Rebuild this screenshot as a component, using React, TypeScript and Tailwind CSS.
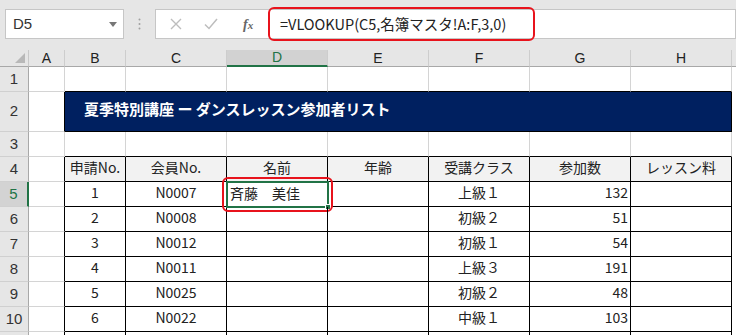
import React from 'react'

const cols = ['w-[36px]', 'w-[61px]', 'w-[101px]', 'w-[101px]', 'w-[101px]', 'w-[101px]', 'w-[101px]', 'w-[101px]']
const letters = ['A', 'B', 'C', 'D', 'E', 'F', 'G', 'H']

const rows = [
  { no: '1', member: 'N0007', name: '斉藤　美佳', cls: '上級１', count: '132' },
  { no: '2', member: 'N0008', name: '', cls: '初級２', count: '51' },
  { no: '3', member: 'N0012', name: '', cls: '初級１', count: '54' },
  { no: '4', member: 'N0011', name: '', cls: '上級３', count: '191' },
  { no: '5', member: 'N0025', name: '', cls: '初級２', count: '48' },
  { no: '6', member: 'N0022', name: '', cls: '中級１', count: '103' },
]

const jp = "font-['Noto_Sans_CJK_JP',sans-serif]"

function RowHead({ n, h = 'h-[25px]', active }: { n?: string; h?: string; active?: boolean }) {
  return (
    <div
      className={`${h} w-[29px] shrink-0 flex items-center justify-center border-b border-[#d0d0d0] font-['Liberation_Sans',sans-serif] text-[15px] ${
        active ? 'bg-[#d3d3d3] text-[#217346] border-r-2 border-r-[#217346]' : 'bg-[#e6e6e6] text-[#333] border-r border-r-[#a8a8a8]'
      }`}
    >
      {n}
    </div>
  )
}

// plain empty cell with the light grid line
function Blank({ i, h = 'h-[25px]' }: { i: number; h?: string }) {
  return <div className={`${cols[i]} ${h} shrink-0 border-r border-b border-[#d4d4d4] bg-white`} />
}

export default function App() {
  return (
    <div className={`w-[736px] h-[335px] overflow-hidden bg-white ${jp}`}>
      {/* Formula bar */}
      <div className="h-[50px] bg-[#e6e6e6] flex items-start pt-[9px] pl-[5px]">
        <div className="w-[119px] h-[30px] bg-white border border-[#c6c6c6] flex items-center justify-between pl-[7px] pr-[6px]">
          <span className="font-['Liberation_Sans',sans-serif] text-[15px] text-[#333]">D5</span>
          <svg width="8" height="5" viewBox="0 0 8 5">
            <path d="M0 0h8L4 5z" fill="#777" />
          </svg>
        </div>
        <div className="w-[31px] h-[30px] flex items-center justify-center">
          <svg width="3" height="12" viewBox="0 0 3 12">
            <circle cx="1.5" cy="1.5" r="1" fill="#a0a0a0" />
            <circle cx="1.5" cy="6" r="1" fill="#a0a0a0" />
            <circle cx="1.5" cy="10.5" r="1" fill="#a0a0a0" />
          </svg>
        </div>
        <div className="h-[30px] flex-1 bg-white border border-[#c6c6c6] flex items-center">
          <div className="w-[110px] flex items-center shrink-0">
            <svg className="ml-[14px]" width="12" height="12" viewBox="0 0 12 12">
              <path d="M1 1l10 10M11 1L1 11" stroke="#bdbdbd" strokeWidth="1.4" />
            </svg>
            <svg className="ml-[22px]" width="14" height="12" viewBox="0 0 14 12">
              <path d="M1 6.5l4 4L13 1" stroke="#bdbdbd" strokeWidth="1.5" fill="none" />
            </svg>
            <span className="ml-[25px] font-['Liberation_Serif',serif] italic font-bold text-[14px] text-[#666]">
              f<span className="text-[11px]">x</span>
            </span>
          </div>
          <div className="relative flex-1 h-full flex items-center pl-[14px]">
            <span className="text-[14.5px] text-[#222]">=VLOOKUP(C5,名簿マスタ!A:F,3,0)</span>
            <div className="absolute left-[2px] top-[-3px] w-[267px] h-[34px] border-2 border-[#e8131c] rounded-[6px]" />
          </div>
        </div>
      </div>

      {/* Column headers */}
      <div className="flex h-[17px]">
        <div className="w-[29px] shrink-0 bg-[#e6e6e6] border-r border-[#c8c8c8] border-b border-b-[#a8a8a8] relative">
          <svg className="absolute right-[3px] bottom-[3px]" width="10" height="10" viewBox="0 0 10 10">
            <path d="M10 0v10H0z" fill="#b8b8b8" />
          </svg>
        </div>
        {letters.map((l, i) => (
          <div
            key={l}
            className={`${cols[i]} shrink-0 flex items-center justify-center font-['Liberation_Sans',sans-serif] text-[14px] border-r border-[#cdcdcd] ${
              l === 'D'
                ? 'bg-[#d2d2d2] text-[#217346] border-b-2 border-b-[#217346]'
                : 'bg-[#e6e6e6] text-[#222] border-b border-b-[#a8a8a8]'
            }`}
          >
            {l}
          </div>
        ))}
        <div className="flex-1 bg-[#e6e6e6] border-b border-[#a8a8a8]" />
      </div>

      {/* Row 1 */}
      <div className="flex">
        <RowHead n="1" />
        <Blank i={0} />
        {[1, 2, 3, 4, 5, 6, 7].map((i) => (
          <div key={i} className={`${cols[i]} h-[25px] shrink-0 border-r border-[#d4d4d4] border-b border-b-black`} />
        ))}
      </div>

      {/* Row 2 : title */}
      <div className="flex">
        <RowHead n="2" h="h-[40px]" />
        <div className="w-[36px] h-[40px] shrink-0 border-r border-r-black border-b border-[#d4d4d4]" />
        <div className="w-[667px] h-[40px] shrink-0 bg-[#002060] border-r border-b border-black flex items-center pl-[19px] pb-[4px]">
          <span className="text-white font-bold text-[15px]">夏季特別講座 ー ダンスレッスン参加者リスト</span>
        </div>
      </div>

      {/* Row 3 */}
      <div className="flex">
        <RowHead n="3" />
        <Blank i={0} />
        {[1, 2, 3, 4, 5, 6, 7].map((i) => (
          <div key={i} className={`${cols[i]} h-[25px] shrink-0 border-r border-[#d4d4d4] border-b border-b-black`} />
        ))}
      </div>

      {/* Row 4 : table header */}
      <div className="flex">
        <RowHead n="4" />
        <div className="w-[36px] h-[25px] shrink-0 border-r border-r-black border-b border-[#d4d4d4]" />
        {['申請No.', '会員No.', '名前', '年齢', '受講クラス', '参加数', 'レッスン料'].map((t, k) => (
          <div
            key={t}
            className={`${cols[k + 1]} h-[25px] shrink-0 bg-[#f2f2f2] border-r border-b border-black flex items-center justify-center text-[14px] text-[#222] pb-[4px]`}
          >
            {t}
          </div>
        ))}
      </div>

      {/* Data rows */}
      {rows.map((r, idx) => (
        <div key={r.no} className="flex">
          <RowHead n={String(idx + 5)} active={idx === 0} />
          <div className="w-[36px] h-[25px] shrink-0 border-r border-r-black border-b border-[#d4d4d4]" />
          <div className="w-[61px] h-[25px] shrink-0 border-r border-b border-black flex items-center justify-center text-[14px] text-[#222] pb-[4px]">
            {r.no}
          </div>
          <div className="w-[101px] h-[25px] shrink-0 border-r border-b border-black flex items-center justify-center text-[14px] text-[#222] pb-[4px]">
            {r.member}
          </div>
          <div className="relative w-[101px] h-[25px] shrink-0 border-r border-b border-black flex items-center pl-[3px] text-[14px] text-[#222] pb-[2px]">
            {r.name}
            {idx === 0 && (
              <>
                <div className="absolute left-[-1px] top-[-1px] w-[103px] h-[27px] border-2 border-[#217346]" />
                <div className="absolute right-[-4px] bottom-[-4px] w-[6px] h-[6px] bg-[#217346] border border-white" />
                <div className="absolute left-[-5px] top-[-5px] w-[111px] h-[35px] border-2 border-[#e8131c] rounded-[6px]" />
              </>
            )}
          </div>
          <div className="w-[101px] h-[25px] shrink-0 border-r border-b border-black" />
          <div className="w-[101px] h-[25px] shrink-0 border-r border-b border-black flex items-center justify-center text-[14px] text-[#222] pb-[4px]">
            {r.cls}
          </div>
          <div className="w-[101px] h-[25px] shrink-0 border-r border-b border-black flex items-center justify-end pr-[2px] text-[14px] text-[#222] pb-[4px]">
            {r.count}
          </div>
          <div className="w-[101px] h-[25px] shrink-0 border-r border-b border-black" />
        </div>
      ))}

      {/* Row 11, only its top edge shows */}
      <div className="flex">
        <RowHead />
        <div className="w-[36px] h-[25px] shrink-0 border-r border-r-black border-b border-[#d4d4d4]" />
        {[1, 2, 3, 4, 5, 6, 7].map((i) => (
          <div key={i} className={`${cols[i]} h-[25px] shrink-0 border-r border-b border-black`} />
        ))}
      </div>
    </div>
  )
}
